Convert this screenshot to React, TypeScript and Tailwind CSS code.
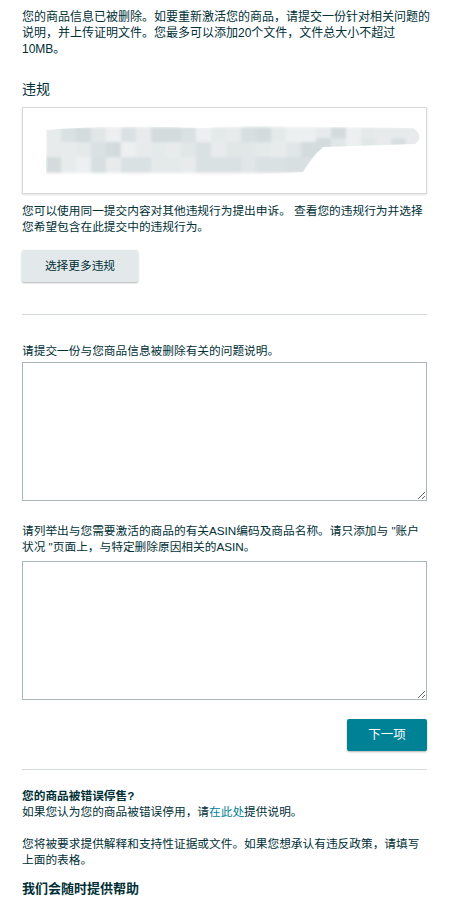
import { useMemo } from "react";

const tones = ["#d3dbdc", "#dae1e2", "#e1e6e7", "#e7ebec", "#edf0f0", "#d7dfe0", "#e4e9e9"];

function BlurredViolation() {
  // pixelated, blurred stand-in for the hidden violation text
  const cells = useMemo(() => {
    const out: { x: number; y: number; c: string }[] = [];
    let seed = 7;
    const next = () => {
      seed = (seed * 9301 + 49297) % 233280;
      return seed / 233280;
    };
    for (let x = 23; x < 398; x += 15) {
      const rows = x < 283 ? [19, 34, 49] : [19, 30];
      for (const y of rows) {
        out.push({ x, y, c: tones[Math.floor(next() * tones.length)] });
      }
    }
    return out;
  }, []);

  return (
    <svg className="block h-full w-full" viewBox="0 0 403 85" preserveAspectRatio="none">
      <defs>
        <filter id="soft" x="-5%" y="-20%" width="110%" height="140%">
          <feGaussianBlur stdDeviation="1.4" />
        </filter>
        <clipPath id="shape">
          <path d="M23 22 Q90 16 180 20 Q260 16 300 19 L390 20 Q402 28 392 36 L300 39 Q288 50 280 64 Q170 72 23 68 Z" />
        </clipPath>
      </defs>
      <g clipPath="url(#shape)" filter="url(#soft)">
        {cells.map((cell) => (
          <rect key={`${cell.x}-${cell.y}`} x={cell.x} y={cell.y} width="15" height="16" fill={cell.c} />
        ))}
      </g>
    </svg>
  );
}

export default function App() {
  return (
    <div className="min-h-[898px] bg-white pl-[22px] pr-[30px] pt-[9px] font-['Liberation_Sans','Noto_Sans_CJK_SC',sans-serif] text-[#002f36]">
      <p className="text-[12px] leading-[16px]">
        <span className="block whitespace-nowrap">您的商品信息已被删除。如要重新激活您的商品，请提交一份针对相关问题的</span>
        <span className="block whitespace-nowrap">说明，并上传证明文件。您最多可以添加20个文件，文件总大小不超过</span>
        <span className="block">10MB。</span>
      </p>

      <h2 className="mt-[22px] text-[14px] leading-[20px]">违规</h2>
      <div className="mt-[8px] h-[87px] border border-[#d5d9d9] bg-white shadow-[0_1px_2px_rgba(0,0,0,0.12)]">
        <BlurredViolation />
      </div>

      <p className="mt-[9px] text-[11.7px] leading-[16px]">
        您可以使用同一提交内容对其他违规行为提出申诉。 查看您的违规行为并选择您希望包含在此提交中的违规行为。
      </p>

      <button className="mt-[15px] h-[32px] w-[116px] rounded-[2px] bg-[#e3e9ea] text-[11.7px] text-[#002f36] shadow-[0_1px_2px_rgba(0,0,0,0.3)]">
        选择更多违规
      </button>

      <div className="mt-[32px] h-px bg-[#d5dbdb]" />

      <label className="mt-[28px] block text-[11.7px] leading-[16px]">请提交一份与您商品信息被删除有关的问题说明。</label>
      <textarea className="mt-[3px] block h-[139px] w-full border border-[#aab7b8] bg-white" />

      <label className="mt-[22px] block text-[11.7px] leading-[16px]">
        请列举出与您需要激活的商品的有关ASIN编码及商品名称。请只添加与 "账户状况 "页面上，与特定删除原因相关的ASIN。
      </label>
      <textarea className="mt-[6px] block h-[139px] w-full border border-[#aab7b8] bg-white" />

      <div className="mt-[19px] flex justify-end">
        <button className="h-[32px] w-[80px] rounded-[2px] bg-[#008296] text-[12.5px] text-white shadow-[0_1px_2px_rgba(0,0,0,0.3)]">
          下一项
        </button>
      </div>

      <div className="mt-[18px] h-px bg-[#d5dbdb]" />

      <div className="mt-[18px] text-[11.7px] leading-[16px]">
        <p className="font-bold">您的商品被错误停售?</p>
        <p>
          如果您认为您的商品被错误停用，请<a className="text-[#008296]" href="#">在此处</a>提供说明。
        </p>
      </div>

      <p className="mt-[16px] text-[11.7px] leading-[16px]">
        您将被要求提供解释和支持性证据或文件。如果您想承认有违反政策，请填写上面的表格。
      </p>

      <h3 className="mt-[12px] text-[13px] font-bold leading-[18px]">我们会随时提供帮助</h3>
    </div>
  );
}
